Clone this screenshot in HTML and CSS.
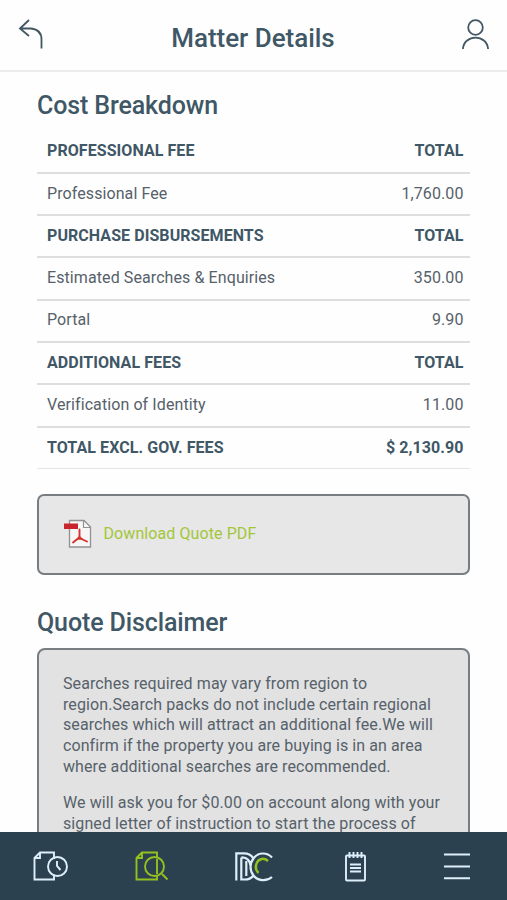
FILE: index.html
```html
<!DOCTYPE html>
<html lang="en">
<head>
<meta charset="utf-8">
<title>Matter Details</title>
<link rel="stylesheet" href="styles.css">
</head>
<body>
<div class="app">
  <header class="header">
    <svg class="back" width="26" height="32" viewBox="0 0 26 32" fill="none"><path d="M11 2 2 10.500l9 7.500M2 10.500h11q10.500 1 10.500 11v9"/></svg>
    <h1>Matter Details</h1>
    <svg class="user" width="28" height="32" viewBox="0 0 28 32" fill="none"><circle cx="13.500" cy="9.500" r="7.300"/><path d="M.900 31C2 15.800 25 15.800 26.100 31"/></svg>
  </header>
  <main class="content">
    <h2>Cost Breakdown</h2>
    <table class="costs">
      <tr class="head"><td>PROFESSIONAL FEE</td><td>TOTAL</td></tr>
      <tr><td>Professional Fee</td><td>1,760.00</td></tr>
      <tr class="head"><td>PURCHASE DISBURSEMENTS</td><td>TOTAL</td></tr>
      <tr><td>Estimated Searches &amp; Enquiries</td><td>350.00</td></tr>
      <tr><td>Portal</td><td>9.90</td></tr>
      <tr class="head"><td>ADDITIONAL FEES</td><td>TOTAL</td></tr>
      <tr><td>Verification of Identity</td><td>11.00</td></tr>
      <tr class="head"><td>TOTAL EXCL. GOV. FEES</td><td>$ 2,130.90</td></tr>
    </table>
    <a class="download">
      <svg width="28" height="30" viewBox="0 0 28 30" fill="none">
        <path d="M5.500 1.500H20l6.500 6.500v20H5.500z" fill="#f7f7f7" stroke="#929292" stroke-width="1.300"/>
        <path d="M19.500 1.500V8.500H26.500" stroke="#929292" stroke-width="1.200"/>
        <path d="M0 4.500h14v5.500H0z" fill="#c9252d"/>
        <path d="M15.500 10.500v7l-1.500 2-5 4M15.500 17.500l2 2.500 5.500 2.500M14 19.500l4 .5" stroke="#d6342f" stroke-width="1.900" stroke-linecap="round"/>
      </svg>
      <span>Download Quote PDF</span>
    </a>
    <h2>Quote Disclaimer</h2>
    <section class="disclaimer">
      <p>Searches required may vary from region to<br>region.Search packs do not include certain regional<br>searches which will attract an additional fee.We will<br>confirm if the property you are buying is in an area<br>where additional searches are recommended.</p>
      <p>We will ask you for $0.00 on account along with your<br>signed letter of instruction to start the process of</p>
    </section>
  </main>
  <nav class="nav">
    <svg width="38" height="36" viewBox="0 0 38 36" fill="none"><path d="M22 10V3.500H8L2.500 9v21.500H22v-5M8 3.500V9H2.500"/><circle cx="25.500" cy="17.500" r="9.500"/><path d="M25 12v5l3.500 4"/></svg>
    <svg class="active" width="38" height="36" viewBox="0 0 38 36" fill="none"><path d="M24 9V3.500H9L3.500 9v21.500H24V27M9 3.500V9H3.500M24 10v15M29 25l5.500 5.500"/><circle cx="21.500" cy="17.500" r="9.500"/></svg>
    <svg width="40" height="36" viewBox="0 0 40 36" fill="none"><path d="M2.300 31.500V4.300H10c4 0 7 1.500 9 4.500M7.300 8.500v22H11c3.500 0 6-1 8-3.500M7.300 8.500q8.500-.5 9.500 9.500M12.300 12v15M38 8.500C33 3 24 3 19.500 9.500c-4 5-4 12 0 17C24 32.500 33 32.500 38 28" stroke-width="2.200"/><path class="inner" d="M34 12c-4-3.500-9-2.500-11 1.500-2 3.500-1.500 8 1.500 10.500"/></svg>
    <svg width="38" height="36" viewBox="0 0 38 36" fill="none"><rect x="9" y="6.500" width="19" height="25" rx="1"/><path d="M12.500 3v6M16.500 3v6M20.500 3v6M24.500 3v6M13 15.500h11M13 19h11M13 22.500h11"/></svg>
    <svg width="38" height="36" viewBox="0 0 38 36" fill="none"><path d="M6 5.500h26M6 17.500h26M6 29.200h26"/></svg>
  </nav>
</div>
</body>
</html>
```

FILE: styles.css
```css
* { box-sizing: border-box; }
body { margin: 0; background: #fefefe; color: #56616a; font: 16px/20.8px Roboto, sans-serif; letter-spacing: .09px; }
.app { height: 900px; display: flex; flex-direction: column; overflow: hidden; }
.header { flex: none; height: 72px; border-bottom: 2px solid #ececec; display: flex; align-items: center; justify-content: space-between; padding: 0 17px 2px 18px; }
.header svg { stroke: #435762; stroke-width: 1.800; }
h1, h2 { margin: 0; color: #405766; font-weight: 500; line-height: 32px; }
h1 { font-size: 26px; letter-spacing: -.03px; padding-top: 8px; }
h2 { font-size: 25px; letter-spacing: -.12px; }
.content { flex: 1; min-height: 0; overflow: hidden; padding: 18px 37px 0; }
.costs { width: 433px; margin-top: 8.500px; border-collapse: collapse; }
.costs tr { height: 42.300px; border-bottom: 2px solid #dedede; }
.costs tr:last-child { border-bottom: 1px solid #e5e5e5; }
.costs td { padding: 0 6.500px 0 10px; }
.costs td:last-child { text-align: right; }
.costs .head { color: #405766; font-weight: 700; letter-spacing: .07px; }
.download { display: flex; align-items: center; gap: 11.500px; height: 81px; margin: 24.500px 0 32px; padding: 0 25px; border: 2px solid #777d80; border-radius: 7px; background: #e7e7e7; color: #a3c639; }
.disclaimer { height: 300px; margin-top: 9px; padding: 24px 24px 0; border: 2px solid #777d80; border-radius: 8px; background: #e2e2e2; }
.disclaimer p { margin: 0 0 15px; white-space: nowrap; }
.nav { flex: none; height: 68px; display: flex; align-items: center; justify-content: space-around; padding-top: 1px; background: #2c4150; }
.nav svg { stroke: #deeffa; stroke-width: 1.900; }
.nav .active, .nav .inner { stroke: #94c11f; }
.nav .inner { stroke-width: 2.500; }
```
